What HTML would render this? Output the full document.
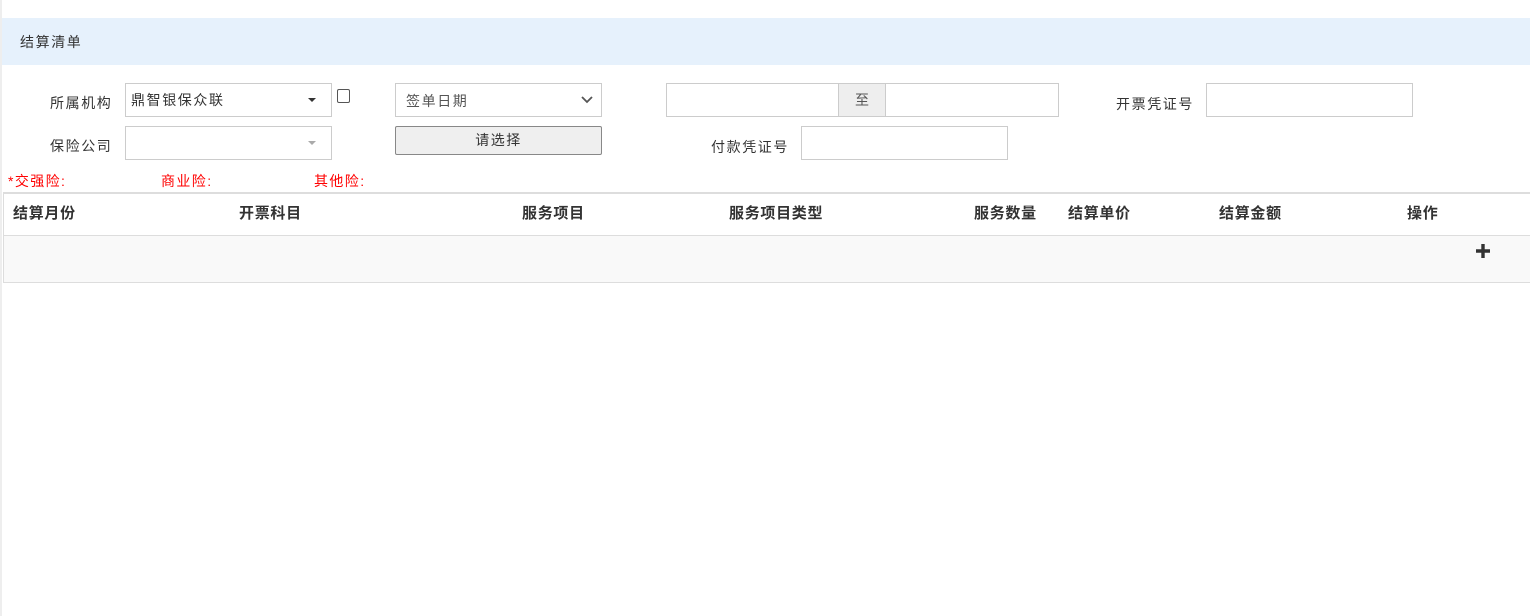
<!DOCTYPE html>
<html><head><meta charset="utf-8"><style>
*{margin:0;padding:0;box-sizing:border-box}
body{width:1530px;height:616px;background:#fff;position:relative;overflow:hidden;font-family:"Liberation Sans","Noto Sans CJK SC",sans-serif;font-size:14px;color:#333}
.a{position:absolute}
.box{position:absolute;border:1px solid #ccc;background:#fff}
.lbl{position:absolute;font-size:14px;color:#333;line-height:20px;letter-spacing:1.6px}
.th{position:absolute;top:203px;font-weight:bold;font-size:15px;color:#333;line-height:22px;letter-spacing:0.7px}
.red{position:absolute;top:172px;color:#f00;font-size:14px;line-height:18px;letter-spacing:1.4px}
</style></head><body>
<div class="a" style="left:0;top:0;width:2px;height:616px;background:#eee"></div>
<div class="a" style="left:2px;top:18px;width:1528px;height:47px;background:#e6f1fc"></div>
<div class="lbl" style="left:20px;top:32px">结算清单</div>

<div class="lbl" style="left:50px;top:93px">所属机构</div>
<div class="box" style="left:125px;top:83px;width:207px;height:34px"></div>
<div class="lbl" style="left:131px;top:90px">鼎智银保众联</div>
<div class="a" style="left:308px;top:98px;border-left:4px solid transparent;border-right:4px solid transparent;border-top:4px solid #333"></div>
<div class="a" style="left:337px;top:89px;width:13px;height:14px;border:1px solid #555;border-radius:2px"></div>

<div class="lbl" style="left:50px;top:136px">保险公司</div>
<div class="box" style="left:125px;top:126px;width:207px;height:34px"></div>
<div class="a" style="left:308px;top:141px;border-left:4px solid transparent;border-right:4px solid transparent;border-top:4px solid #aaa"></div>

<div class="box" style="left:395px;top:83px;width:207px;height:34px"></div>
<div class="lbl" style="left:406px;top:91px;color:#555">签单日期</div>
<svg class="a" style="left:580px;top:95px" width="14" height="10"><path d="M2 2 L7 7 L12 2" stroke="#555" stroke-width="1.8" fill="none"/></svg>
<div class="a" style="left:395px;top:126px;width:207px;height:29px;border:1px solid #888;border-radius:2px;background:#efefef;text-align:center;line-height:27px;color:#333;letter-spacing:1.5px">请选择</div>

<div class="box" style="left:666px;top:83px;width:393px;height:34px"></div>
<div class="a" style="left:838px;top:84px;width:48px;height:32px;background:#eee;border-left:1px solid #ccc;border-right:1px solid #ccc;text-align:center;line-height:32px;color:#555">至</div>

<div class="lbl" style="left:1116px;top:94px">开票凭证号</div>
<div class="box" style="left:1206px;top:83px;width:207px;height:34px"></div>
<div class="lbl" style="left:711px;top:137px">付款凭证号</div>
<div class="box" style="left:801px;top:126px;width:207px;height:34px"></div>

<div class="red" style="left:8px">*交强险:</div>
<div class="red" style="left:161px">商业险:</div>
<div class="red" style="left:314px">其他险:</div>

<div class="a" style="left:3px;top:192px;width:1527px;height:91px;border-top:2px solid #ddd;border-left:1px solid #ddd;border-bottom:1px solid #ddd"></div>
<div class="a" style="left:4px;top:235px;width:1526px;height:1px;background:#ddd"></div>
<div class="a" style="left:4px;top:236px;width:1526px;height:46px;background:#f9f9f9"></div>
<div class="th" style="left:13px">结算月份</div>
<div class="th" style="left:239px">开票科目</div>
<div class="th" style="left:522px">服务项目</div>
<div class="th" style="left:729px">服务项目类型</div>
<div class="th" style="left:974px">服务数量</div>
<div class="th" style="left:1068px">结算单价</div>
<div class="th" style="left:1219px">结算金额</div>
<div class="th" style="left:1407px">操作</div>
<svg class="a" style="left:1475px;top:243px" width="16" height="16"><path d="M8 1V15M1 8H15" stroke="#333" stroke-width="3.4"/></svg>
</body></html>
